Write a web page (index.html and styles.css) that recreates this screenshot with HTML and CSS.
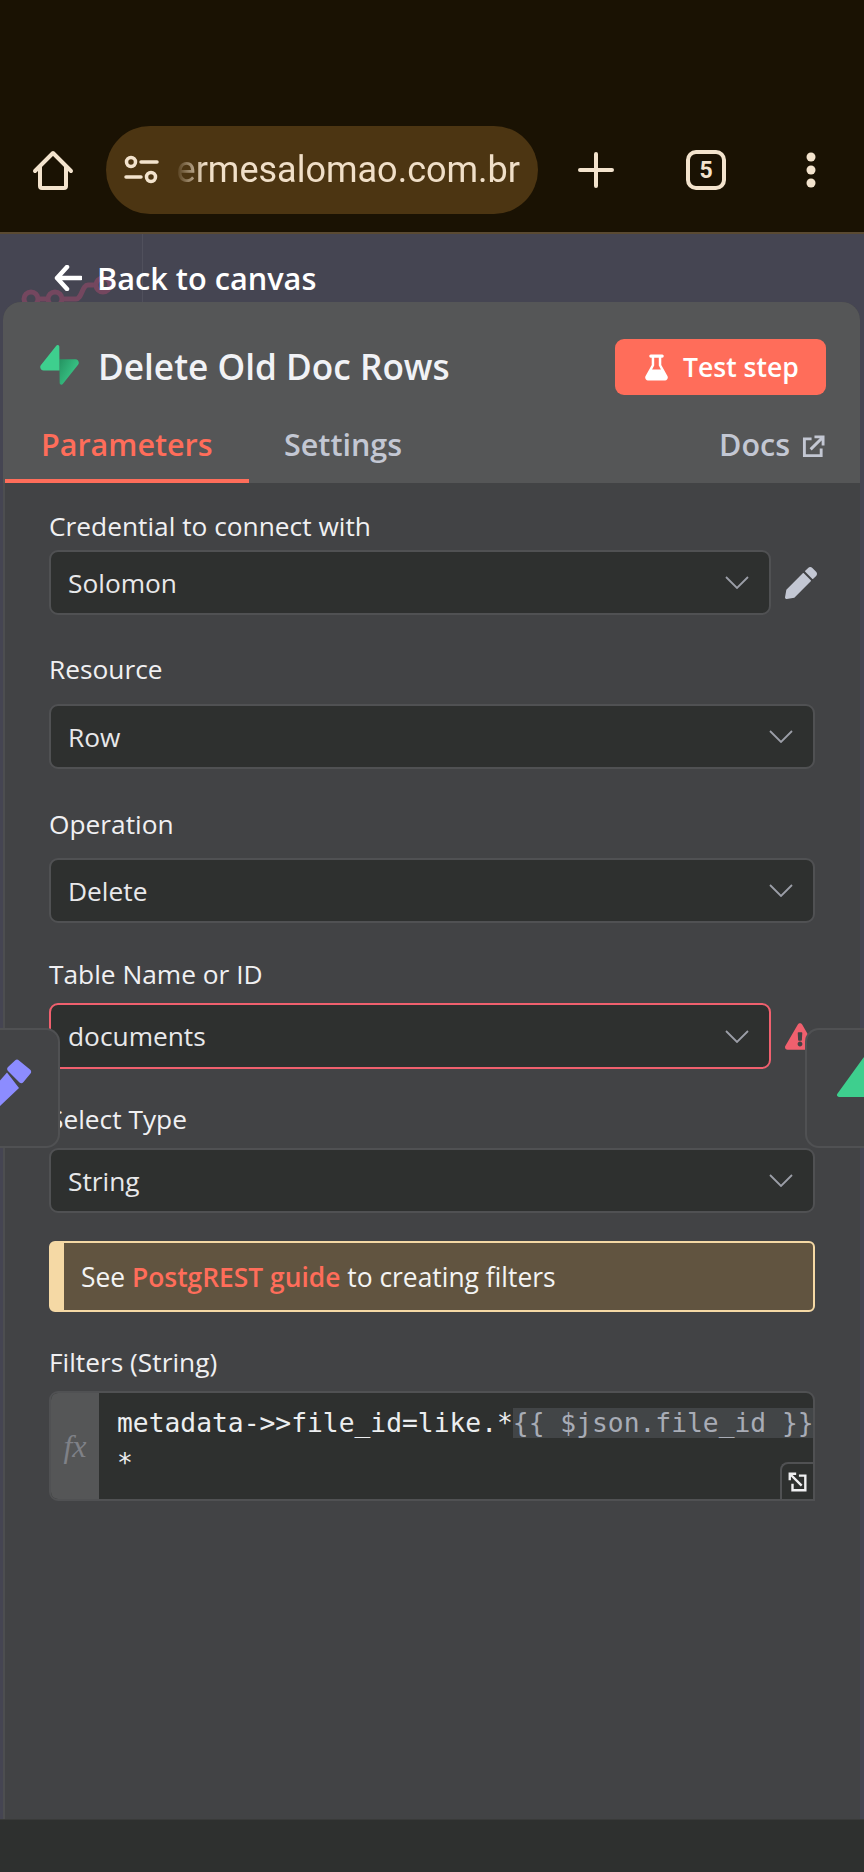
FILE: index.html
```html
<!DOCTYPE html>
<html lang="en">
<head>
<meta charset="utf-8">
<title>Delete Old Doc Rows</title>
<link rel="stylesheet" href="styles.css">
</head>
<body>
<div class="screen">
  <header class="browser">
    <svg class="home" viewBox="0 0 40 39" aria-hidden="true"><path d="M2 20 20 2l18 18M7 16v19a2 2 0 0 0 2 2h22a2 2 0 0 0 2-2V16"/></svg>
    <div class="pill">
      <svg class="tune" viewBox="0 0 32 28" aria-hidden="true"><circle cx="6" cy="6" r="4.5"/><circle cx="26" cy="21" r="4.5"/><path d="M16 6h16M1 21h15"/></svg>
      <div class="url"><span>hermesalomao.com.br</span></div>
    </div>
    <svg class="plus" viewBox="0 0 36 36" aria-hidden="true"><path d="M18 2v32M2 18h32"/></svg>
    <div class="tabs-count">5</div>
    <svg class="dots" viewBox="0 0 10 36" aria-hidden="true"><circle cx="5" cy="5" r="4.5"/><circle cx="5" cy="18" r="4.5"/><circle cx="5" cy="31" r="4.5"/></svg>
  </header>

  <main class="canvas">
    <i class="gridline"></i>
    <svg class="wire" viewBox="0 0 100 40" aria-hidden="true"><circle cx="13" cy="31" r="7"/><circle cx="37" cy="31" r="7"/><path d="M20 31h10M44 31h14c6 0 6-14 12-14h10"/><circle cx="85" cy="17" r="7"/></svg>
    <div class="back">
      <svg class="back-arrow" viewBox="0 0 28 26" aria-hidden="true"><path d="M13 2 3 13l10 11M3 13h24"/></svg>
      <span>Back to canvas</span>
    </div>

    <section class="panel">
      <div class="panel-head">
        <div class="title-row">
          <svg class="logo" viewBox="0 0 109 113" aria-hidden="true">
            <defs><linearGradient id="sb" x1="0" y1="0" x2="1" y2="0.7"><stop offset="0" stop-color="#249361"/><stop offset="1" stop-color="#3ecf8e"/></linearGradient></defs>
            <path fill="url(#sb)" d="M63.708 110.284C60.848 113.885 55.06 111.912 54.991 107.314L53.984 40.063H99.213C107.406 40.063 111.975 49.526 106.88 55.943L63.708 110.284Z"/>
            <path fill="#3ecf8e" d="M45.317 2.071C48.176 -1.53 53.964 0.443 54.033 5.041L54.475 72.292H9.812C1.619 72.292 -2.95 62.829 2.145 56.412L45.317 2.071Z"/>
          </svg>
          <h1 class="title">Delete Old Doc Rows</h1>
          <button class="test-btn">
            <svg class="flask" viewBox="0 0 24 27" aria-hidden="true"><path fill-rule="evenodd" d="M6 0h12a1.6 1.6 0 0 1 0 3.2h-1v7.6l6.4 11.6C24.6 24.600 23 27 21 27H3c-2 0-3.600-2.400-2.400-4.600L7 10.800V3.200H6A1.600 1.600 0 0 1 6 0zM9.600 3.200v8.300L7.400 15.500h9.200l-2.200-4V3.200z"/></svg>
            <span>Test step</span>
          </button>
        </div>
        <nav class="tabs">
          <a class="tab tab-active">Parameters</a>
          <a class="tab tab-settings">Settings</a>
          <a class="tab-docs">Docs
            <svg class="ext" viewBox="0 0 24 24" aria-hidden="true"><path d="M10 4H2.500v17.500H20V14M9 15 22 2M13 2h9v9"/></svg>
          </a>
        </nav>
      </div>

      <div class="panel-body">
        <div class="field f-cred">
          <label class="lbl lb-7">Credential to connect with</label>
          <div class="row">
            <div class="select narrow"><span>Solomon</span><svg class="chev" viewBox="0 0 24 13" aria-hidden="true"><path d="M1 1l11 11L23 1"/></svg></div>
            <svg class="pencil" viewBox="0 0 512 512" aria-hidden="true"><path d="M497.9 142.1l-46.1 46.1c-4.7 4.7-12.3 4.7-17 0l-111-111c-4.7-4.7-4.7-12.3 0-17l46.1-46.1c18.700-18.700 49.100-18.700 67.900 0l60.100 60.100c18.800 18.700 18.800 49.100 0 67.900zM284.200 99.800L21.600 362.400.4 483.900c-2.900 16.400 11.400 30.600 27.800 27.800l121.500-21.300 262.600-262.600c4.700-4.700 4.700-12.300 0-17l-111-111c-4.800-4.700-12.400-4.700-17.100 0z"/></svg>
          </div>
        </div>
        <div class="field f-res">
          <label class="lbl lb-17">Resource</label>
          <div class="select"><span>Row</span><svg class="chev" viewBox="0 0 24 13" aria-hidden="true"><path d="M1 1l11 11L23 1"/></svg></div>
        </div>
        <div class="field f-op">
          <label class="lbl lb-16">Operation</label>
          <div class="select"><span>Delete</span><svg class="chev" viewBox="0 0 24 13" aria-hidden="true"><path d="M1 1l11 11L23 1"/></svg></div>
        </div>
        <div class="field f-table">
          <label class="lbl lb-12">Table Name or ID</label>
          <div class="row">
            <div class="select narrow invalid"><span>documents</span><svg class="chev" viewBox="0 0 24 13" aria-hidden="true"><path d="M1 1l11 11L23 1"/></svg></div>
            <svg class="warn" viewBox="0 0 576 512" aria-hidden="true"><path d="M569.517 440.013C587.975 472.007 564.806 512 527.94 512H48.054c-36.937 0-59.999-40.055-41.577-71.987L246.423 24.035c18.467-32.009 64.72-31.951 83.154 0l239.94 416.978zM288 354c-25.405 0-46 20.595-46 46s20.595 46 46 46 46-20.595 46-46-20.595-46-46-46zm-43.673-165.346l7.418 136c.347 6.364 5.609 11.346 11.982 11.346h48.546c6.373 0 11.635-4.982 11.982-11.346l7.418-136c.375-6.874-5.098-12.654-11.982-12.654h-63.383c-6.884 0-12.356 5.78-11.981 12.654z"/></svg>
          </div>
        </div>
        <div class="field f-type">
          <label class="lbl lb-12">Select Type</label>
          <div class="select"><span>String</span><svg class="chev" viewBox="0 0 24 13" aria-hidden="true"><path d="M1 1l11 11L23 1"/></svg></div>
        </div>
        <div class="callout">See <a class="link">PostgREST guide</a> to creating filters</div>
        <div class="field f-filter">
          <label class="lbl lb-11">Filters (String)</label>
          <div class="expr">
            <div class="fx">fx</div>
            <div class="code">metadata-&gt;&gt;file_id=like.*<span class="hl">{{ $json.file_id }}</span><br>*</div>
            <div class="expand">
              <svg viewBox="0 0 24 24" aria-hidden="true"><path d="M3 10V3h7M3 3l13 13M13 5h7v16H6v-7"/></svg>
            </div>
          </div>
        </div>
      </div>
    </section>

    <aside class="side side-left">
      <svg viewBox="0 0 32 50" aria-hidden="true"><path d="M15 3.500a3 3 0 0 1 4 0L30 12.500a3 3 0 0 1 .500 4l-7 8.500a3 3 0 0 1-4 .500L8 14a3 3 0 0 1 0-4zM7 15.500 19 31 0 49V23.500z"/></svg>
    </aside>
    <aside class="side side-right">
      <svg viewBox="0 0 40 46" aria-hidden="true"><path d="M31 3 5 39h35V3z"/></svg>
    </aside>
  </main>

  <footer class="bottom"></footer>
</div>
</body>
</html>
```

FILE: styles.css
```css
* { box-sizing: border-box; }
html, body { margin: 0; padding: 0; }
body { background: #2e302f; font-family: "Open Sans", "Liberation Sans", sans-serif; color: #f0f0f2; }

.screen { width: 864px; height: 1872px; display: flex; flex-direction: column; overflow: hidden; }

/* browser chrome */
.browser { height: 234px; flex: none; background: #1a1203; border-bottom: 2px solid #5a4a32; padding: 108px 0 0 33px; display: flex; align-items: center; color: #f3e3cd; }
.home { width: 40px; height: 39px; fill: none; stroke: #f3e3cd; stroke-width: 4; stroke-linecap: round; stroke-linejoin: round; overflow: visible; }
.pill { width: 432px; height: 88px; margin-left: 33px; border-radius: 44px; background: #4c3512; display: flex; align-items: center; padding: 0 18px 0 19px; }
.tune { width: 32px; height: 28px; flex: none; fill: none; stroke: #f3e3cd; stroke-width: 3.500; stroke-linecap: round; overflow: visible; }
.url { flex: 1; min-width: 0; height: 50px; margin-left: 18px; overflow: hidden; display: flex; justify-content: flex-end; align-items: center; -webkit-mask-image: linear-gradient(90deg, transparent 0, #000 30px); mask-image: linear-gradient(90deg, transparent 0, #000 30px); }
.url span { font-family: Roboto, "Noto Sans", sans-serif; font-size: 36px; color: #f0dfc8; white-space: nowrap; flex: none; }
.plus { width: 36px; height: 36px; margin-left: 40px; fill: none; stroke: #f3e3cd; stroke-width: 4; stroke-linecap: round; }
.tabs-count { width: 40px; height: 40px; margin-left: 72px; border: 4px solid #f3e3cd; border-radius: 10px; display: flex; align-items: center; justify-content: center; font-family: Roboto, sans-serif; font-weight: 700; font-size: 23px; color: #f3e3cd; }
.dots { width: 10px; height: 36px; margin-left: 80px; fill: #f3e3cd; }

/* canvas */
.canvas { position: relative; flex: 1; min-height: 0; background: #454552; padding: 0 4px 0 3px; display: flex; flex-direction: column; }
.gridline { position: absolute; left: 142px; top: 0; width: 1px; height: 68px; background: #50505c; }
.wire { position: absolute; left: 18px; top: 34px; width: 100px; height: 40px; fill: none; stroke: #74475f; stroke-width: 5; }
.back { position: relative; flex: none; height: 68px; padding: 25px 0 0 51px; display: flex; align-items: flex-start; gap: 15px; }
.back span { font-size: 30.700px; font-weight: 600; line-height: 38px; color: #fff; }
.back-arrow { width: 28px; height: 26px; margin-top: 6px; fill: none; stroke: #fff; stroke-width: 4.500; stroke-linecap: round; stroke-linejoin: round; }

/* panel */
.panel { position: relative; flex: 1; min-height: 0; margin-bottom: 0; border-radius: 18px 18px 0 0; display: flex; flex-direction: column; overflow: hidden; background: #424345; }
.panel-head { flex: none; height: 181px; background: #555657; padding: 37px 0 0 2px; display: flex; flex-direction: column; }
.title-row { display: flex; align-items: center; height: 56px; padding: 0 34px 0 35px; }
.logo { width: 39px; height: 40px; flex: none; margin-top: -5px; }
.title { flex: 1; margin: -2px 0 0 19px; font-size: 35.200px; font-weight: 600; line-height: 48px; color: #f1f2f6; }
.test-btn { width: 211px; height: 56px; flex: none; border: 0; border-radius: 9px; background: #ff6d5a; color: #fff; display: flex; align-items: center; padding: 0 0 0 30px; gap: 15px; font-family: inherit; font-size: 26.500px; font-weight: 600; }
.flask { width: 23px; height: 27px; fill: #fff; flex: none; }
.tabs { flex: 1; display: flex; align-items: flex-start; font-size: 30.500px; font-weight: 600; color: #c3c7d3; padding-top: 29px; position: relative; }
.tab { line-height: 40px; }
.tab-active { width: 244px; height: 88px; margin-top: -29px; padding: 29px 0 0 36px; color: #ff6d5a; border-bottom: 4px solid #ff6d5a; }
.tab-settings { margin-left: 35px; }
.tab-docs { margin-left: auto; padding-right: 35px; display: flex; align-items: center; gap: 12px; line-height: 40px; }
.ext { width: 23px; height: 23px; fill: none; stroke: #c3c7d3; stroke-width: 3; margin-top: 4px; }

/* body */
.panel-body { flex: 1; min-height: 0; padding: 26px 0 0 44px; border-left: 2px solid #4d4e50; }
.field { width: 766px; }
.lbl { display: block; font-size: 26.300px; line-height: 34px; color: #f0f0f2; }
.lb-7 { margin-bottom: 7px; }
.lb-17 { margin-bottom: 18px; }
.lb-16 { margin-bottom: 17px; }
.lb-12 { margin-bottom: 12px; }
.lb-11 { margin-bottom: 12px; }
.f-res { margin-top: 37px; }
.f-op { margin-top: 38px; }
.f-table { margin-top: 34px; }
.f-type { margin-top: 33px; }
.f-filter { margin-top: 33px; }
.row { display: flex; align-items: center; width: 810px; }
.select { height: 65px; background: #2e302f; border: 2px solid #505153; border-radius: 9px; display: flex; align-items: center; justify-content: space-between; padding: 0 20px 0 17px; font-size: 26.300px; color: #e8e8ea; }
.narrow { width: 722px; flex: none; }
.invalid { height: 66px; border-color: #f0606e; }
.chev { width: 24px; height: 13px; fill: none; stroke: #9c9ea8; stroke-width: 1.800; }
.pencil { width: 32px; height: 32px; margin-left: 14px; fill: #c3c7d3; }
.warn { width: 30px; height: 27px; margin-left: 14px; fill: #f0606e; }
.callout { width: 766px; height: 71px; margin-top: 28px; background: #615440; border: 2px solid #f5d9a5; border-left-width: 15px; border-radius: 6px; padding: 0 0 0 17px; display: flex; align-items: center; white-space: pre; font-size: 26.400px; color: #f4f4f4; }
.link { color: #ff6d5a; font-weight: 600; }

.expr { position: relative; width: 766px; height: 110px; display: flex; border: 2px solid #505153; border-radius: 9px 9px 0 9px; background: #2e302f; overflow: hidden; }
.fx { width: 48px; flex: none; background: #555657; display: flex; align-items: center; justify-content: center; font-family: "Liberation Serif", serif; font-style: italic; font-size: 32px; color: #7f8187; }
.code { flex: 1; min-width: 0; padding: 10px 0 0 18px; font-family: "DejaVu Sans Mono", monospace; font-size: 26.300px; line-height: 40px; color: #eceef0; white-space: pre; overflow: hidden; }
.hl { background: #424547; color: #a8acb6; padding-right: 5px; }
.expand { position: absolute; right: 0; bottom: 0; width: 33px; height: 37px; background: #2e302f; border: 2px solid #505153; border-width: 2px 0 0 2px; border-radius: 8px 0 0 0; display: flex; align-items: center; justify-content: center; }
.expand svg { width: 22px; height: 24px; fill: none; stroke: #f0f0f2; stroke-width: 2.600; }

/* side cards over the panel */
.side { position: absolute; top: 794px; width: 60px; height: 120px; background: #434446; border: 2px solid #505153; border-radius: 14px; }
.side-left { left: 0; border-left: 0; border-radius: 0 14px 14px 0; }
.side-left svg { position: absolute; left: 0; top: 27px; width: 32px; height: 50px; fill: #8c8cff; }
.side-right { right: 0; width: 59px; border-right: 0; border-radius: 14px 0 0 14px; }
.side-right svg { position: absolute; left: 27px; top: 26px; width: 40px; height: 46px; fill: #3ecf8e; stroke: #3ecf8e; stroke-width: 4; stroke-linejoin: round; }

.bottom { flex: none; height: 53px; background: #2e302f; border-top: 1px solid #3a3b3a; }
```
